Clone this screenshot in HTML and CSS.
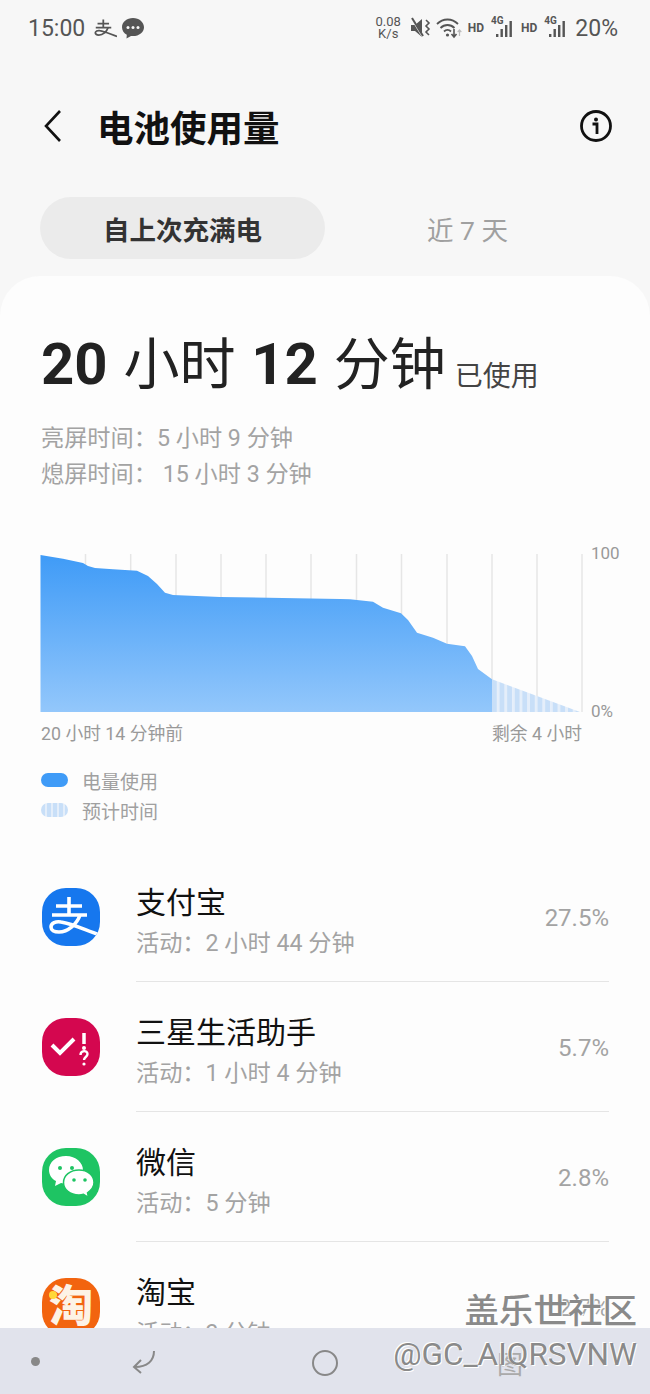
FILE: index.html
```html
<!DOCTYPE html>
<html lang="zh-CN">
<head>
  <meta charset="UTF-8" />
  <meta name="viewport" content="width=device-width, initial-scale=1" />
  <title>电池使用量</title>
  <link rel="stylesheet" href="styles.css">
</head>
<body>
  <div id="statusbar">
    <div class="status-left">
      <span class="clock">15:00</span>
      <svg class="status-zhi" width="23" height="20" viewBox="6 6 52 44"><path d="M27 9v18M14 18h26M10 27h35" fill="none" stroke="#555" stroke-width="4"/><path d="M38 27c-3 9-12 17-21 17-5 0-8-2-8-5 0-4 5-6 10-5 13 2 26 9 39 13" fill="none" stroke="#555" stroke-width="4"/></svg>
      <svg width="24" height="24" viewBox="0 0 24 24"><path d="M12 2C5.800 2 1 6 1 11.200c0 3.300 2 6 4.800 7.600L5.500 22.500l4.500-2.600c.7.100 1.300.2 2 .2 6.200 0 11-4 11-8.900S18.200 2 12 2z" fill="#555"/><circle cx="7" cy="11.500" r="1.500" fill="#f7f7f7"/><circle cx="12" cy="11.500" r="1.500" fill="#f7f7f7"/><circle cx="17" cy="11.500" r="1.500" fill="#f7f7f7"/></svg>
    </div>
    <div class="status-right">
      <span class="speed">0.08<br>K/s</span>
      <svg class="mute" width="20" height="22" viewBox="0 0 20 22"><path d="M0 8h4l7-6v18l-7-6H0z" fill="#555"/><path d="M1 2l11 18" stroke="#f7f7f7" stroke-width="2"/><path d="M1 1l11 18" stroke="#555" stroke-width="2"/><path d="M15 3l3 3-3 3 3 3-3 3 3 3" fill="none" stroke="#555" stroke-width="1.600"/></svg>
      <svg class="wifi" width="26" height="22" viewBox="0 0 26 22"><g fill="none" stroke="#555" stroke-width="1.800"><path d="M1 7c6-6 15-6 21 0"/><path d="M4.500 11c4-4 10-4 14 0"/><path d="M8 14.500c2-2 5-2 7 0"/></g><circle cx="11.500" cy="18" r="1.600" fill="#555"/><path d="M18 12v7M15.500 17l2.500 3 2.500-3" fill="none" stroke="#555" stroke-width="1.600"/><path d="M23.500 19v-6M21.700 15l1.800-2 1.800 2" fill="none" stroke="#bbb" stroke-width="1.200"/></svg>
      <span class="hd">HD</span>
      <span class="signal">
        <span class="net">4G</span>
        <svg width="24" height="22" viewBox="0 0 24 22"><path d="M5 17h2.400v3H5zM9.500 12h2.400v8H9.500zM14 8h2.400v12H14zM18.500 4h2.400v16h-2.400z" fill="#555"/></svg>
      </span>
      <span class="hd">HD</span>
      <span class="signal">
        <span class="net">4G</span>
        <svg width="24" height="22" viewBox="0 0 24 22"><path d="M5 17h2.400v3H5zM9.500 12h2.400v8H9.500zM14 8h2.400v12H14zM18.500 4h2.400v16h-2.400z" fill="#555"/></svg>
      </span>
      <span class="battery">20%</span>
    </div>
  </div>

  <header id="titlebar">
    <svg class="back" width="20" height="34" viewBox="0 0 20 34"><path d="M17 2L3 17l14 15" fill="none" stroke="#111" stroke-width="2.600"/></svg>
    <h1>电池使用量</h1>
    <svg class="info" width="34" height="34" viewBox="0 0 34 34"><circle cx="17" cy="17" r="14.500" fill="none" stroke="#111" stroke-width="2.800"/><circle cx="17" cy="10.500" r="2" fill="#111"/><path d="M13.500 15H18v10" fill="none" stroke="#111" stroke-width="2.800"/></svg>
  </header>

  <div id="tabs">
    <div class="tab active">自上次充满电</div>
    <div class="tab">近 7 天</div>
  </div>

  <main id="card">
    <section class="summary">
      <div class="total"><b>20</b> 小时 <b>12</b> 分钟<small>已使用</small></div>
      <div class="detail">
        <div>亮屏时间：5 小时 9 分钟</div>
        <div>熄屏时间： 15 小时 3 分钟</div>
      </div>
    </section>

    <svg class="chart" width="650" height="180" viewBox="0 540 650 180">
      <defs>
        <linearGradient id="fillBlue" x1="0" y1="0" x2="0" y2="1">
          <stop offset="0" stop-color="#3f9bf7"/>
          <stop offset="1" stop-color="#93c7fb"/>
        </linearGradient>
        <pattern id="stripes" width="7.600" height="10" patternUnits="userSpaceOnUse" x="492">
          <rect width="5" height="10" fill="#c8dff8"/>
          <rect x="5" width="2.600" height="10" fill="#e4eefa"/>
        </pattern>
      </defs>
      <g stroke="#e6e6e6" stroke-width="1.500">
        <path d="M85.500 553V711M130.700 553V711M176 553V711M221 553V711M266 553V711M311 553V711M356.500 553V711M401.500 553V711M447 553V711M492 553V711M537 553V711M582 553V711"/>
      </g>
      <path d="M492 678.300L580 711H492z" fill="url(#stripes)"/>
      <path d="M40.500 554L63 557.700L83 562L88 565L95 567L113 568.300L137 569.700L148 575L157 583L165 591.700L173 594L220 596L340 598L350 598.300L373 600.700L383 606.700L401 612.300L408 619L417 631.700L433 636.700L447 642.700L465 645.300L472 655L478 668L492 678.300V711H40.500z" fill="url(#fillBlue)"/>
      <text class="axis" x="591" y="558">100</text>
      <text class="axis" x="591" y="716">0%</text>
    </svg>
    <div class="chart-labels">
      <span>20 小时 14 分钟前</span>
      <span>剩余 4 小时</span>
    </div>

    <div class="legend">
      <div class="legend-row"><i class="swatch used"></i>电量使用</div>
      <div class="legend-row"><i class="swatch estimate"></i>预计时间</div>
    </div>

    <div class="apps">
      <div class="app">
        <div class="app-icon alipay">
          <svg width="58" height="58" viewBox="0 0 58 58"><path d="M27 9v18M14 18h26M10 27h35" fill="none" stroke="#fff" stroke-width="3.600"/><path d="M38 27c-3 9-12 17-21 17-5 0-8-2-8-5 0-4 5-6 10-5 13 2 26 9 39 13" fill="none" stroke="#fff" stroke-width="3.600"/></svg>
        </div>
        <div class="app-body">
          <div class="app-text"><div class="app-name">支付宝</div><div class="app-sub">活动：2 小时 44 分钟</div></div>
          <div class="app-pct">27.5%</div>
        </div>
      </div>
      <div class="app">
        <div class="app-icon samsung">
          <svg width="58" height="58" viewBox="0 0 58 58"><path d="M10 27l8 8 14-14" fill="none" stroke="#fff" stroke-width="4"/><path d="M42 15v11" stroke="#fff" stroke-width="3.500"/><circle cx="42" cy="30" r="2" fill="#fff"/><path d="M38.500 37c0-5 7-5 7-1 0 3-3.500 3-3.500 6" fill="none" stroke="#fff" stroke-width="2.400"/><circle cx="42" cy="46" r="1.600" fill="#fff"/></svg>
        </div>
        <div class="app-body">
          <div class="app-text"><div class="app-name">三星生活助手</div><div class="app-sub">活动：1 小时 4 分钟</div></div>
          <div class="app-pct">5.7%</div>
        </div>
      </div>
      <div class="app">
        <div class="app-icon wechat">
          <svg width="58" height="58" viewBox="0 0 58 58"><path d="M24 8C14 8 7 14 7 22c0 5 3 9 7 11l-1 5 6-3c2 .5 3.500 .7 5 .7 10 0 17-6.500 17-13.700S34 8 24 8z" fill="#fff"/><circle cx="18" cy="20" r="2" fill="#1ec463"/><circle cx="30" cy="20" r="2" fill="#1ec463"/><path d="M37 22c-9 0-15.500 5.500-15.500 12.500S28 47 37 47c1.500 0 3-.2 4.500-.7l5 3-1-4.500C49.500 42 52 38.500 52 34.500 52 27.500 46 22 37 22z" fill="#fff" stroke="#1ec463" stroke-width="1.500"/><circle cx="32" cy="32" r="1.800" fill="#1ec463"/><circle cx="43" cy="32" r="1.800" fill="#1ec463"/></svg>
        </div>
        <div class="app-body">
          <div class="app-text"><div class="app-name">微信</div><div class="app-sub">活动：5 分钟</div></div>
          <div class="app-pct">2.8%</div>
        </div>
      </div>
      <div class="app">
        <div class="app-icon taobao"><span>淘</span><i class="dot"></i></div>
        <div class="app-body">
          <div class="app-text"><div class="app-name">淘宝</div><div class="app-sub">活动：3 分钟</div></div>
          <div class="app-pct">2.7%</div>
        </div>
      </div>
    </div>
  </main>

  <nav id="navbar">
    <i class="nav-dot"></i>
    <svg class="nav-back" width="26" height="26" viewBox="0 0 26 26"><path d="M23 2c0 10-7 16-19 16M10 11l-7 7 7 6" fill="none" stroke="#888" stroke-width="2"/></svg>
    <i class="nav-home"></i>
    <span class="nav-recent">图</span>
  </nav>

  <div class="watermark">
    <div class="wm-cn">盖乐世社区</div>
    <div class="wm-id">@GC_AIQRSVNW</div>
  </div>
</body>
</html>
```
FILE: styles.css
```css
* {
  box-sizing: border-box;
}

html, body {
  margin: 0;
  padding: 0;
}

body {
  position: relative;
  width: 650px;
  height: 1394px;
  overflow: hidden;
  display: flex;
  flex-direction: column;
  background: #f7f7f7;
  color: #111;
  font-family: Roboto, "Noto Sans CJK SC", sans-serif;
}

/* status bar */
#statusbar {
  height: 56px;
  flex: none;
  padding: 0 32px 0 28px;
  display: flex;
  align-items: center;
  justify-content: space-between;
  color: #555;
}

.status-left, .status-right {
  display: flex;
  align-items: center;
}

.clock {
  font-size: 23px;
}

.status-zhi {
  margin: 0 4px 0 9px;
}

.speed {
  width: 27px;
  font-size: 13px;
  line-height: 12px;
  text-align: center;
}

.mute {
  margin-left: 9px;
}

.wifi {
  margin-left: 5px;
}

.hd {
  margin-left: 6px;
  font-size: 12px;
  font-weight: 700;
}

.signal {
  position: relative;
  width: 24px;
  height: 22px;
  margin-left: 7px;
}

.net {
  position: absolute;
  left: 0;
  top: -2px;
  font-size: 10px;
  font-weight: 700;
}

.signal svg {
  display: block;
}

.battery {
  margin-left: 7px;
  font-size: 23px;
}

/* title */
#titlebar {
  height: 88px;
  margin-top: 26px;
  flex: none;
  padding: 0 37px 0 43px;
  display: flex;
  align-items: center;
}

#titlebar h1 {
  flex: 1;
  margin: 0 0 0 34px;
  font-size: 36.500px;
  font-weight: 700;
  color: #111;
}

/* tabs */
#tabs {
  height: 62px;
  margin: 27px 0 17px 0;
  flex: none;
  padding: 0 40px;
  display: grid;
  grid-template-columns: 285px 285px;
}

.tab {
  display: flex;
  align-items: center;
  justify-content: center;
  border-radius: 31px;
  font-size: 26.500px;
  color: #a0a0a0;
}

.tab.active {
  background: #ebebeb;
  color: #333;
  font-weight: 700;
}

/* card */
#card {
  flex: 1;
  overflow: hidden;
  background: #fdfdfd;
  border-radius: 40px 40px 0 0;
}

.summary {
  padding: 56px 0 0 41px;
}

.total {
  font-size: 56px;
  line-height: 64px;
  word-spacing: 2px;
  color: #222;
  white-space: nowrap;
}

.total b {
  font-size: 58px;
}

.total small {
  margin-left: 9px;
  font-size: 28px;
  color: #444;
  vertical-align: -2px;
}

.detail {
  margin-top: 11px;
  font-size: 23.200px;
  line-height: 36px;
  color: #a3a3a3;
}

.chart {
  display: block;
  margin-top: 49px;
}

.axis {
  font-size: 17px;
  fill: #999;
}

.chart-labels {
  width: 582px;
  height: 22px;
  padding-left: 41px;
  display: flex;
  justify-content: space-between;
  align-items: center;
  font-size: 17.800px;
  color: #999;
}

.legend {
  margin-top: 22px;
  padding-left: 41px;
}

.legend-row {
  height: 30px;
  display: flex;
  align-items: center;
  font-size: 19px;
  color: #a0a0a0;
}

.swatch {
  width: 27px;
  height: 14px;
  margin-right: 14px;
  border-radius: 7px;
}

.swatch.used {
  background: #3f9bf7;
}

.swatch.estimate {
  background: repeating-linear-gradient(90deg, #c8dff8 0 4px, #e4eefa 4px 6px);
}

/* app list */
.apps {
  margin-top: 27px;
}

.app {
  height: 130px;
  padding: 0 41px 0 42px;
  display: flex;
  align-items: center;
}

.app-icon {
  position: relative;
  width: 58px;
  height: 58px;
  flex: none;
  border-radius: 24px;
  overflow: hidden;
  color: #fff;
  text-align: center;
}

.app-icon svg {
  position: absolute;
  left: 0;
  top: 0;
}

.alipay {
  background: #1677ee;
}

.samsung {
  background: #d4074f;
}

.wechat {
  background: #1ec463;
}

.taobao {
  background: #f2640f;
}

.taobao span {
  display: block;
  font-size: 44px;
  line-height: 58px;
  font-weight: 900;
  color: #fdf3e6;
}

.taobao .dot {
  position: absolute;
  left: 7px;
  top: 13px;
  width: 8px;
  height: 8px;
  border-radius: 50%;
  background: #ffd83a;
}

.app-body {
  flex: 1;
  height: 130px;
  margin-left: 36px;
  border-bottom: 1px solid #e5e5e5;
  display: flex;
  align-items: center;
  justify-content: space-between;
}

.app-text {
  padding-top: 13px;
}

.app-name {
  font-size: 30px;
  line-height: 40px;
  color: #111;
}

.app-sub {
  font-size: 23.200px;
  line-height: 40px;
  color: #a3a3a3;
}

.app-pct {
  padding-top: 2px;
  font-size: 24px;
  color: #a3a3a3;
}

/* nav bar */
#navbar {
  position: relative;
  height: 66px;
  flex: none;
  background: #e1e3ec;
}

.nav-dot {
  position: absolute;
  left: 31px;
  top: 29px;
  width: 9px;
  height: 9px;
  border-radius: 50%;
  background: #888;
}

.nav-back {
  position: absolute;
  left: 131px;
  top: 21px;
}

.nav-home {
  position: absolute;
  left: 312px;
  top: 22px;
  width: 26px;
  height: 26px;
  border: 2px solid #888;
  border-radius: 50%;
}

.nav-recent {
  position: absolute;
  left: 497px;
  top: 16px;
  font-size: 26px;
  color: #aaa;
}

/* watermark */
.watermark {
  position: absolute;
  right: 13px;
  top: 1290px;
  text-align: right;
  color: #8a8a8a;
  text-shadow: 1px 1px 0 #fff, -1px -1px 0 #fff;
}

.wm-cn {
  font-size: 34.500px;
  line-height: 42px;
  font-weight: 500;
}

.wm-id {
  font-size: 31.500px;
  line-height: 46px;
  white-space: nowrap;
}
```
